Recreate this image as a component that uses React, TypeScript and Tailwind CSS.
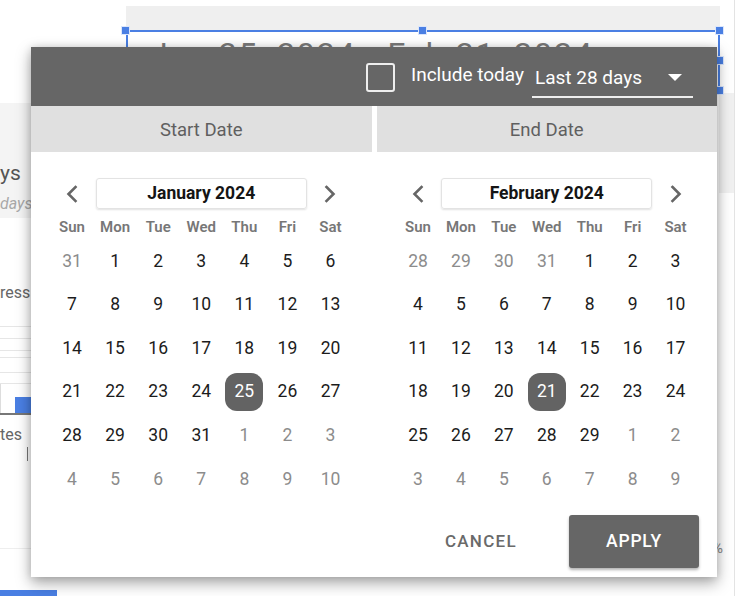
import React from "react";

type Day = { n: number; muted: boolean };

function buildMonth(year: number, month: number): Day[] {
  const first = new Date(year, month, 1);
  const start = new Date(year, month, 1 - first.getDay());
  const days: Day[] = [];
  for (let i = 0; i < 42; i++) {
    const d = new Date(start.getFullYear(), start.getMonth(), start.getDate() + i);
    days.push({ n: d.getDate(), muted: d.getMonth() !== month });
  }
  return days;
}

const WEEKDAYS = ["Sun", "Mon", "Tue", "Wed", "Thu", "Fri", "Sat"];

function Chevron({ dir }: { dir: "left" | "right" }) {
  return (
    <svg width="14" height="20" viewBox="0 0 14 20" fill="none">
      <path
        d={dir === "left" ? "M10.5 3 L3.5 10 L10.5 17" : "M3.5 3 L10.5 10 L3.5 17"}
        stroke="#666666"
        strokeWidth="2.6"
        strokeLinecap="square"
      />
    </svg>
  );
}

function Calendar({ label, year, month, selected }: { label: string; year: number; month: number; selected: number }) {
  const days = buildMonth(year, month);
  return (
    <div className="flex flex-col">
      <div className="grid grid-cols-7 h-[31px] items-center">
        <div className="flex justify-center">
          <Chevron dir="left" />
        </div>
        <div className="col-span-5 mx-[2px] h-[31px] flex items-center justify-center rounded-[3px] border border-[#e3e3e3] shadow-[0_1px_2px_rgba(0,0,0,0.12)] text-[17.5px] font-bold text-[#151515]">
          {label}
        </div>
        <div className="flex justify-center">
          <Chevron dir="right" />
        </div>
      </div>
      <div className="grid grid-cols-7 mt-[6px] h-[24px] items-center">
        {WEEKDAYS.map((w) => (
          <div key={w} className="text-center text-[15px] font-semibold text-[#777777]">
            {w}
          </div>
        ))}
      </div>
      <div className="grid grid-cols-7">
        {days.map((d, i) => {
          const isSel = !d.muted && d.n === selected;
          return (
            <div key={i} className="h-[43.6px] flex items-center justify-center">
              {isSel ? (
                <span className="w-[38px] h-[38px] rounded-[12px] bg-[#636363] text-white flex items-center justify-center text-[17.5px]">
                  {d.n}
                </span>
              ) : (
                <span className={d.muted ? "text-[17.5px] text-[#8c8c8c]" : "text-[17.5px] text-[#1c1c1c]"}>{d.n}</span>
              )}
            </div>
          );
        })}
      </div>
    </div>
  );
}

function Handle({ className }: { className: string }) {
  return <div className={"absolute w-[9px] h-[9px] bg-[#4a7fe3] border border-[#dbe6fb] " + className} />;
}

// the date-range control on the report canvas, selected
function SelectedControl() {
  return (
    <div className="absolute left-[126px] top-[6px] w-[594px]">
      <div className="h-[24px] bg-[#efefef]" />
      <div className="relative h-[17px] overflow-hidden bg-white border-t-2 border-x-2 border-[#4a7fe3]">
        <div className="pl-[22px] pt-[2px] text-[32px] leading-[40px] tracking-[2px] text-[#7a7a7a] whitespace-nowrap">
          Jan 25, 2024 - Feb 21, 2024
        </div>
      </div>
      <div className="ml-auto w-[2px] h-[45px] bg-[#4a7fe3]" />
      <Handle className="-left-[5px] top-[20px]" />
      <Handle className="left-[292px] top-[20px]" />
      <Handle className="-right-[4px] top-[20px]" />
      <Handle className="-right-[4px] top-[50px]" />
      <Handle className="-right-[4px] top-[80px]" />
    </div>
  );
}

function LeftEdge() {
  return (
    <div className="w-[40px] flex flex-col pt-[103px]">
      <div className="h-[115px] bg-[#f4f4f4] pt-[57px]">
        <div className="text-[21px] leading-[26px] text-[#555555]">ys</div>
        <div className="mt-[8px] text-[16px] leading-[20px] italic text-[#a8a8a8]">days</div>
      </div>
      <div className="mt-[65px] text-[16px] leading-[20px] text-[#666666]">ress</div>
      <div className="mt-[23px] flex flex-col">
        <div className="h-px bg-[#e6e6e6]" />
        <div className="mt-[11px] h-px bg-[#e6e6e6]" />
        <div className="mt-[11px] h-px bg-[#e6e6e6]" />
        <div className="mt-[6px] h-px bg-[#e6e6e6]" />
        <div className="mt-[14px] h-px bg-[#e6e6e6]" />
        <div className="mt-[10px] h-px bg-[#e6e6e6]" />
        <div className="h-[29px] flex items-end border-l border-[#dddddd]">
          <div className="ml-[14px] w-[20px] h-[16px] bg-[#4a7fe3]" />
        </div>
        <div className="h-[2px] bg-[#777777]" />
      </div>
      <div className="mt-[10px] text-[16px] leading-[20px] text-[#666666]">tes</div>
      <div className="ml-[27px] mt-[2px] w-px h-[14px] bg-[#777777]" />
      <div className="mt-[87px] h-px bg-[#eeeeee]" />
      <div className="mt-[41px] w-[57px] h-[6px] bg-[#4a7fe3]" />
    </div>
  );
}

function RightEdge() {
  return (
    <div className="ml-auto w-[23px] flex">
      <div className="w-[15px] flex flex-col">
        <div className="mt-[93px] h-[100px] bg-[#f1f1f1]" />
        <div className="mt-[345px] -ml-[7px] text-[15px] leading-[20px] text-[#8a8a8a]">%</div>
      </div>
      <div className="w-px bg-[#e3e3e3]" />
    </div>
  );
}

export default function App() {
  return (
    <div
      className="relative w-[742px] h-[596px] overflow-hidden bg-white flex"
      style={{ fontFamily: "Roboto, 'Liberation Sans', sans-serif" }}
    >
      <LeftEdge />
      <RightEdge />
      <SelectedControl />

      <div className="absolute left-[31px] top-[47px] w-[686px] h-[530px] bg-white flex flex-col shadow-[0_6px_14px_rgba(0,0,0,0.35),0_0_8px_rgba(0,0,0,0.12)]">
        <div className="h-[59px] bg-[#666666] flex items-center justify-end pr-[24px]">
          <div className="w-[29px] h-[29px] rounded-[3px] border-2 border-[#eeeeee] mt-[1px]" />
          <span className="ml-[16px] mb-[3px] text-[19px] text-white">Include today</span>
          <div className="ml-[8px] w-[161px] h-[59px] flex flex-col justify-end">
            <div className="flex items-center justify-between pl-[3px] pr-[11px] pb-[4px]">
              <span className="text-[19px] text-white">Last 28 days</span>
              <svg width="14" height="8" viewBox="0 0 14 8">
                <path d="M0 0 L14 0 L7 7 Z" fill="#ffffff" />
              </svg>
            </div>
            <div className="h-[2px] bg-[#eeeeee] mb-[8px]" />
          </div>
        </div>

        <div className="grid grid-cols-2 gap-[5px]">
          <div className="h-[46px] pt-[3px] bg-[#e0e0e0] flex items-center justify-center text-[18.5px] text-[#5f5f5f]">Start Date</div>
          <div className="h-[46px] pt-[3px] bg-[#e0e0e0] flex items-center justify-center text-[18.5px] text-[#5f5f5f]">End Date</div>
        </div>

        <div className="grid grid-cols-2 gap-[5px] pt-[26px]">
          <div className="px-[19.5px]">
            <Calendar label="January 2024" year={2024} month={0} selected={25} />
          </div>
          <div className="px-[20px]">
            <Calendar label="February 2024" year={2024} month={1} selected={21} />
          </div>
        </div>

        <div className="flex items-center justify-end pr-[18px] mt-[14px]">
          <span className="mt-[2px] text-[17px] font-medium text-[#6a6a6a] tracking-[1.3px]">CANCEL</span>
          <div className="ml-[52px] w-[130px] h-[53px] rounded-[3px] bg-[#666666] shadow-[0_2px_3px_rgba(0,0,0,0.3)] flex items-center justify-center text-[17.5px] font-medium text-white tracking-[0.8px]">
            APPLY
          </div>
        </div>
      </div>
    </div>
  );
}
